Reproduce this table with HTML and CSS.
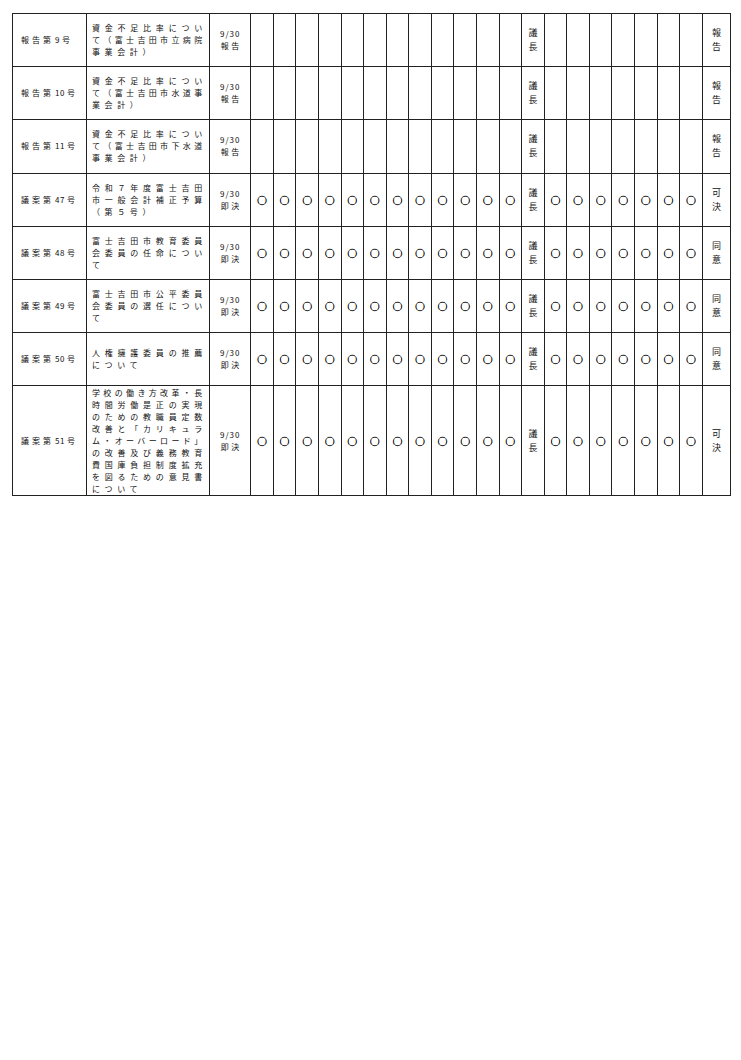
FILE: index.html
```html
<!DOCTYPE html>
<html lang="ja">
<head>
<meta charset="utf-8">
<title>議決結果</title>
<link rel="stylesheet" href="styles.css">
</head>
<body>
<div class="page">
<table class="votes">
<colgroup>
<col class="c-no"><col class="c-title"><col class="c-date"><col span="20" class="c-m"><col class="c-res">
</colgroup>
<tbody>
<tr>
<td class="no">報告第<span class="num">9</span>号</td>
<td class="title"><div class="j">資金不足比率につい</div><div class="j">て（富士吉田市立病院</div><div class="last">事業会計）</div></td>
<td class="date"><div class="d">9/30</div><div class="k">報告</div></td>
<td></td><td></td><td></td><td></td><td></td><td></td><td></td><td></td><td></td><td></td><td></td><td></td>
<td class="v">議<br>長</td>
<td></td><td></td><td></td><td></td><td></td><td></td><td></td>
<td class="v">報<br>告</td>
</tr>
<tr>
<td class="no">報告第<span class="num">10</span>号</td>
<td class="title"><div class="j">資金不足比率につい</div><div class="j">て（富士吉田市水道事</div><div class="last">業会計）</div></td>
<td class="date"><div class="d">9/30</div><div class="k">報告</div></td>
<td></td><td></td><td></td><td></td><td></td><td></td><td></td><td></td><td></td><td></td><td></td><td></td>
<td class="v">議<br>長</td>
<td></td><td></td><td></td><td></td><td></td><td></td><td></td>
<td class="v">報<br>告</td>
</tr>
<tr>
<td class="no">報告第<span class="num">11</span>号</td>
<td class="title"><div class="j">資金不足比率につい</div><div class="j">て（富士吉田市下水道</div><div class="last">事業会計）</div></td>
<td class="date"><div class="d">9/30</div><div class="k">報告</div></td>
<td></td><td></td><td></td><td></td><td></td><td></td><td></td><td></td><td></td><td></td><td></td><td></td>
<td class="v">議<br>長</td>
<td></td><td></td><td></td><td></td><td></td><td></td><td></td>
<td class="v">報<br>告</td>
</tr>
<tr>
<td class="no">議案第<span class="num">47</span>号</td>
<td class="title"><div class="j">令和７年度富士吉田</div><div class="j">市一般会計補正予算</div><div class="last">（第５号）</div></td>
<td class="date"><div class="d">9/30</div><div class="k">即決</div></td>
<td class="m">○</td><td class="m">○</td><td class="m">○</td><td class="m">○</td><td class="m">○</td><td class="m">○</td><td class="m">○</td><td class="m">○</td><td class="m">○</td><td class="m">○</td><td class="m">○</td><td class="m">○</td>
<td class="v">議<br>長</td>
<td class="m">○</td><td class="m">○</td><td class="m">○</td><td class="m">○</td><td class="m">○</td><td class="m">○</td><td class="m">○</td>
<td class="v">可<br>決</td>
</tr>
<tr>
<td class="no">議案第<span class="num">48</span>号</td>
<td class="title"><div class="j">富士吉田市教育委員</div><div class="j">会委員の任命につい</div><div class="last">て</div></td>
<td class="date"><div class="d">9/30</div><div class="k">即決</div></td>
<td class="m">○</td><td class="m">○</td><td class="m">○</td><td class="m">○</td><td class="m">○</td><td class="m">○</td><td class="m">○</td><td class="m">○</td><td class="m">○</td><td class="m">○</td><td class="m">○</td><td class="m">○</td>
<td class="v">議<br>長</td>
<td class="m">○</td><td class="m">○</td><td class="m">○</td><td class="m">○</td><td class="m">○</td><td class="m">○</td><td class="m">○</td>
<td class="v">同<br>意</td>
</tr>
<tr>
<td class="no">議案第<span class="num">49</span>号</td>
<td class="title"><div class="j">富士吉田市公平委員</div><div class="j">会委員の選任につい</div><div class="last">て</div></td>
<td class="date"><div class="d">9/30</div><div class="k">即決</div></td>
<td class="m">○</td><td class="m">○</td><td class="m">○</td><td class="m">○</td><td class="m">○</td><td class="m">○</td><td class="m">○</td><td class="m">○</td><td class="m">○</td><td class="m">○</td><td class="m">○</td><td class="m">○</td>
<td class="v">議<br>長</td>
<td class="m">○</td><td class="m">○</td><td class="m">○</td><td class="m">○</td><td class="m">○</td><td class="m">○</td><td class="m">○</td>
<td class="v">同<br>意</td>
</tr>
<tr>
<td class="no">議案第<span class="num">50</span>号</td>
<td class="title"><div class="j">人権擁護委員の推薦</div><div class="last">について</div></td>
<td class="date"><div class="d">9/30</div><div class="k">即決</div></td>
<td class="m">○</td><td class="m">○</td><td class="m">○</td><td class="m">○</td><td class="m">○</td><td class="m">○</td><td class="m">○</td><td class="m">○</td><td class="m">○</td><td class="m">○</td><td class="m">○</td><td class="m">○</td>
<td class="v">議<br>長</td>
<td class="m">○</td><td class="m">○</td><td class="m">○</td><td class="m">○</td><td class="m">○</td><td class="m">○</td><td class="m">○</td>
<td class="v">同<br>意</td>
</tr>
<tr class="tall">
<td class="no">議案第<span class="num">51</span>号</td>
<td class="title"><div class="j">学校の働き方改革・長</div><div class="j">時間労働是正の実現</div><div class="j">のための教職員定数</div><div class="j">改善と「カリキュラ</div><div class="j">ム・オーバーロード」</div><div class="j">の改善及び義務教育</div><div class="j">費国庫負担制度拡充</div><div class="j">を図るための意見書</div><div class="last">について</div></td>
<td class="date"><div class="d">9/30</div><div class="k">即決</div></td>
<td class="m">○</td><td class="m">○</td><td class="m">○</td><td class="m">○</td><td class="m">○</td><td class="m">○</td><td class="m">○</td><td class="m">○</td><td class="m">○</td><td class="m">○</td><td class="m">○</td><td class="m">○</td>
<td class="v">議<br>長</td>
<td class="m">○</td><td class="m">○</td><td class="m">○</td><td class="m">○</td><td class="m">○</td><td class="m">○</td><td class="m">○</td>
<td class="v">可<br>決</td>
</tr>
</tbody>
</table>
</div>
</body>
</html>
```

FILE: styles.css
```css
* { box-sizing: border-box; }

body {
  margin: 0;
  background: #fff;
  color: #111;
  font-family: "Noto Sans CJK JP", "Noto Sans", sans-serif;
}

.page {
  padding: 13px 0 0 12px;
}

.votes {
  border-collapse: collapse;
  table-layout: fixed;
  width: 719px;
}

.c-no { width: 74px; }
.c-title { width: 123.2px; }
.c-date { width: 41px; }
.c-m { width: 22.58px; }
.c-res { width: 28.7px; }

.votes tr { height: 53.2px; }
.votes tr.tall { height: 110px; }

.votes td {
  border: 1px solid #222;
  padding: 0;
  vertical-align: middle;
  font-size: 8px;
  line-height: 12px;
}

.no {
  padding-left: 8px !important;
  letter-spacing: 3px;
  white-space: nowrap;
}

.num {
  letter-spacing: 0.5px;
  margin: 0 2px 0 1px;
}

.title {
  padding: 0 7px 0 5px !important;
}

.title .j {
  text-align: justify;
  text-align-last: justify;
}

.title .last {
  letter-spacing: 4.6px;
  white-space: nowrap;
}

.date {
  text-align: center;
}

.date .d { letter-spacing: 1px; }
.date .k { letter-spacing: 2.5px; padding-left: 2px; }

.m {
  text-align: center;
  font-size: 9.5px !important;
  color: #000;
  -webkit-text-stroke: 0.5px #000;
}

.v {
  text-align: center;
  font-size: 9px !important;
  line-height: 14px !important;
}
```
